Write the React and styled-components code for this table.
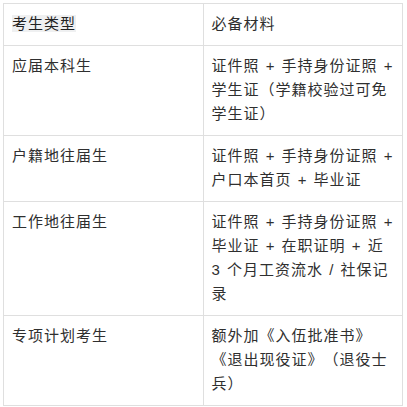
import React from 'react';
import styled, { createGlobalStyle } from 'styled-components';

const GlobalStyle = createGlobalStyle`
  html, body {
    margin: 0;
    padding: 0;
    background: #ffffff;
  }
`;

const Page = styled.div`
  padding: 3px 4px 0 3px;
  font-family: "Liberation Sans", "Noto Sans CJK SC", sans-serif;
`;

const Table = styled.table`
  width: 400px;
  border-collapse: collapse;
  table-layout: fixed;
  color: #2f2f2f;
  font-size: 15px;
  letter-spacing: 1px;
  word-spacing: 1px;
  line-height: 24px;
  text-spacing-trim: space-all;
`;

const Cell = styled.td`
  width: 50%;
  border: 1px solid #dfdfdf;
  padding: 8px 8px 9px 8px;
  vertical-align: top;
  text-align: left;
`;

const HeaderMark = styled.span`
  background: #eff0f1;
  color: #222222;
`;

const rows = [
  ['应届本科生', '证件照 + 手持身份证照 + 学生证（学籍校验过可免学生证）'],
  ['户籍地往届生', '证件照 + 手持身份证照 + 户口本首页 + 毕业证'],
  ['工作地往届生', '证件照 + 手持身份证照 + 毕业证 + 在职证明 + 近 3 个月工资流水 / 社保记录'],
  ['专项计划考生', '额外加《入伍批准书》《退出现役证》（退役士兵）'],
];

const App = () => (
  <>
    <GlobalStyle />
    <Page>
      <Table>
        <tbody>
          <tr>
            <Cell><HeaderMark>考生类型</HeaderMark></Cell>
            <Cell>必备材料</Cell>
          </tr>
          {rows.map(([type, docs]) => (
            <tr key={type}>
              <Cell>{type}</Cell>
              <Cell>{docs}</Cell>
            </tr>
          ))}
        </tbody>
      </Table>
    </Page>
  </>
);

export default App;
